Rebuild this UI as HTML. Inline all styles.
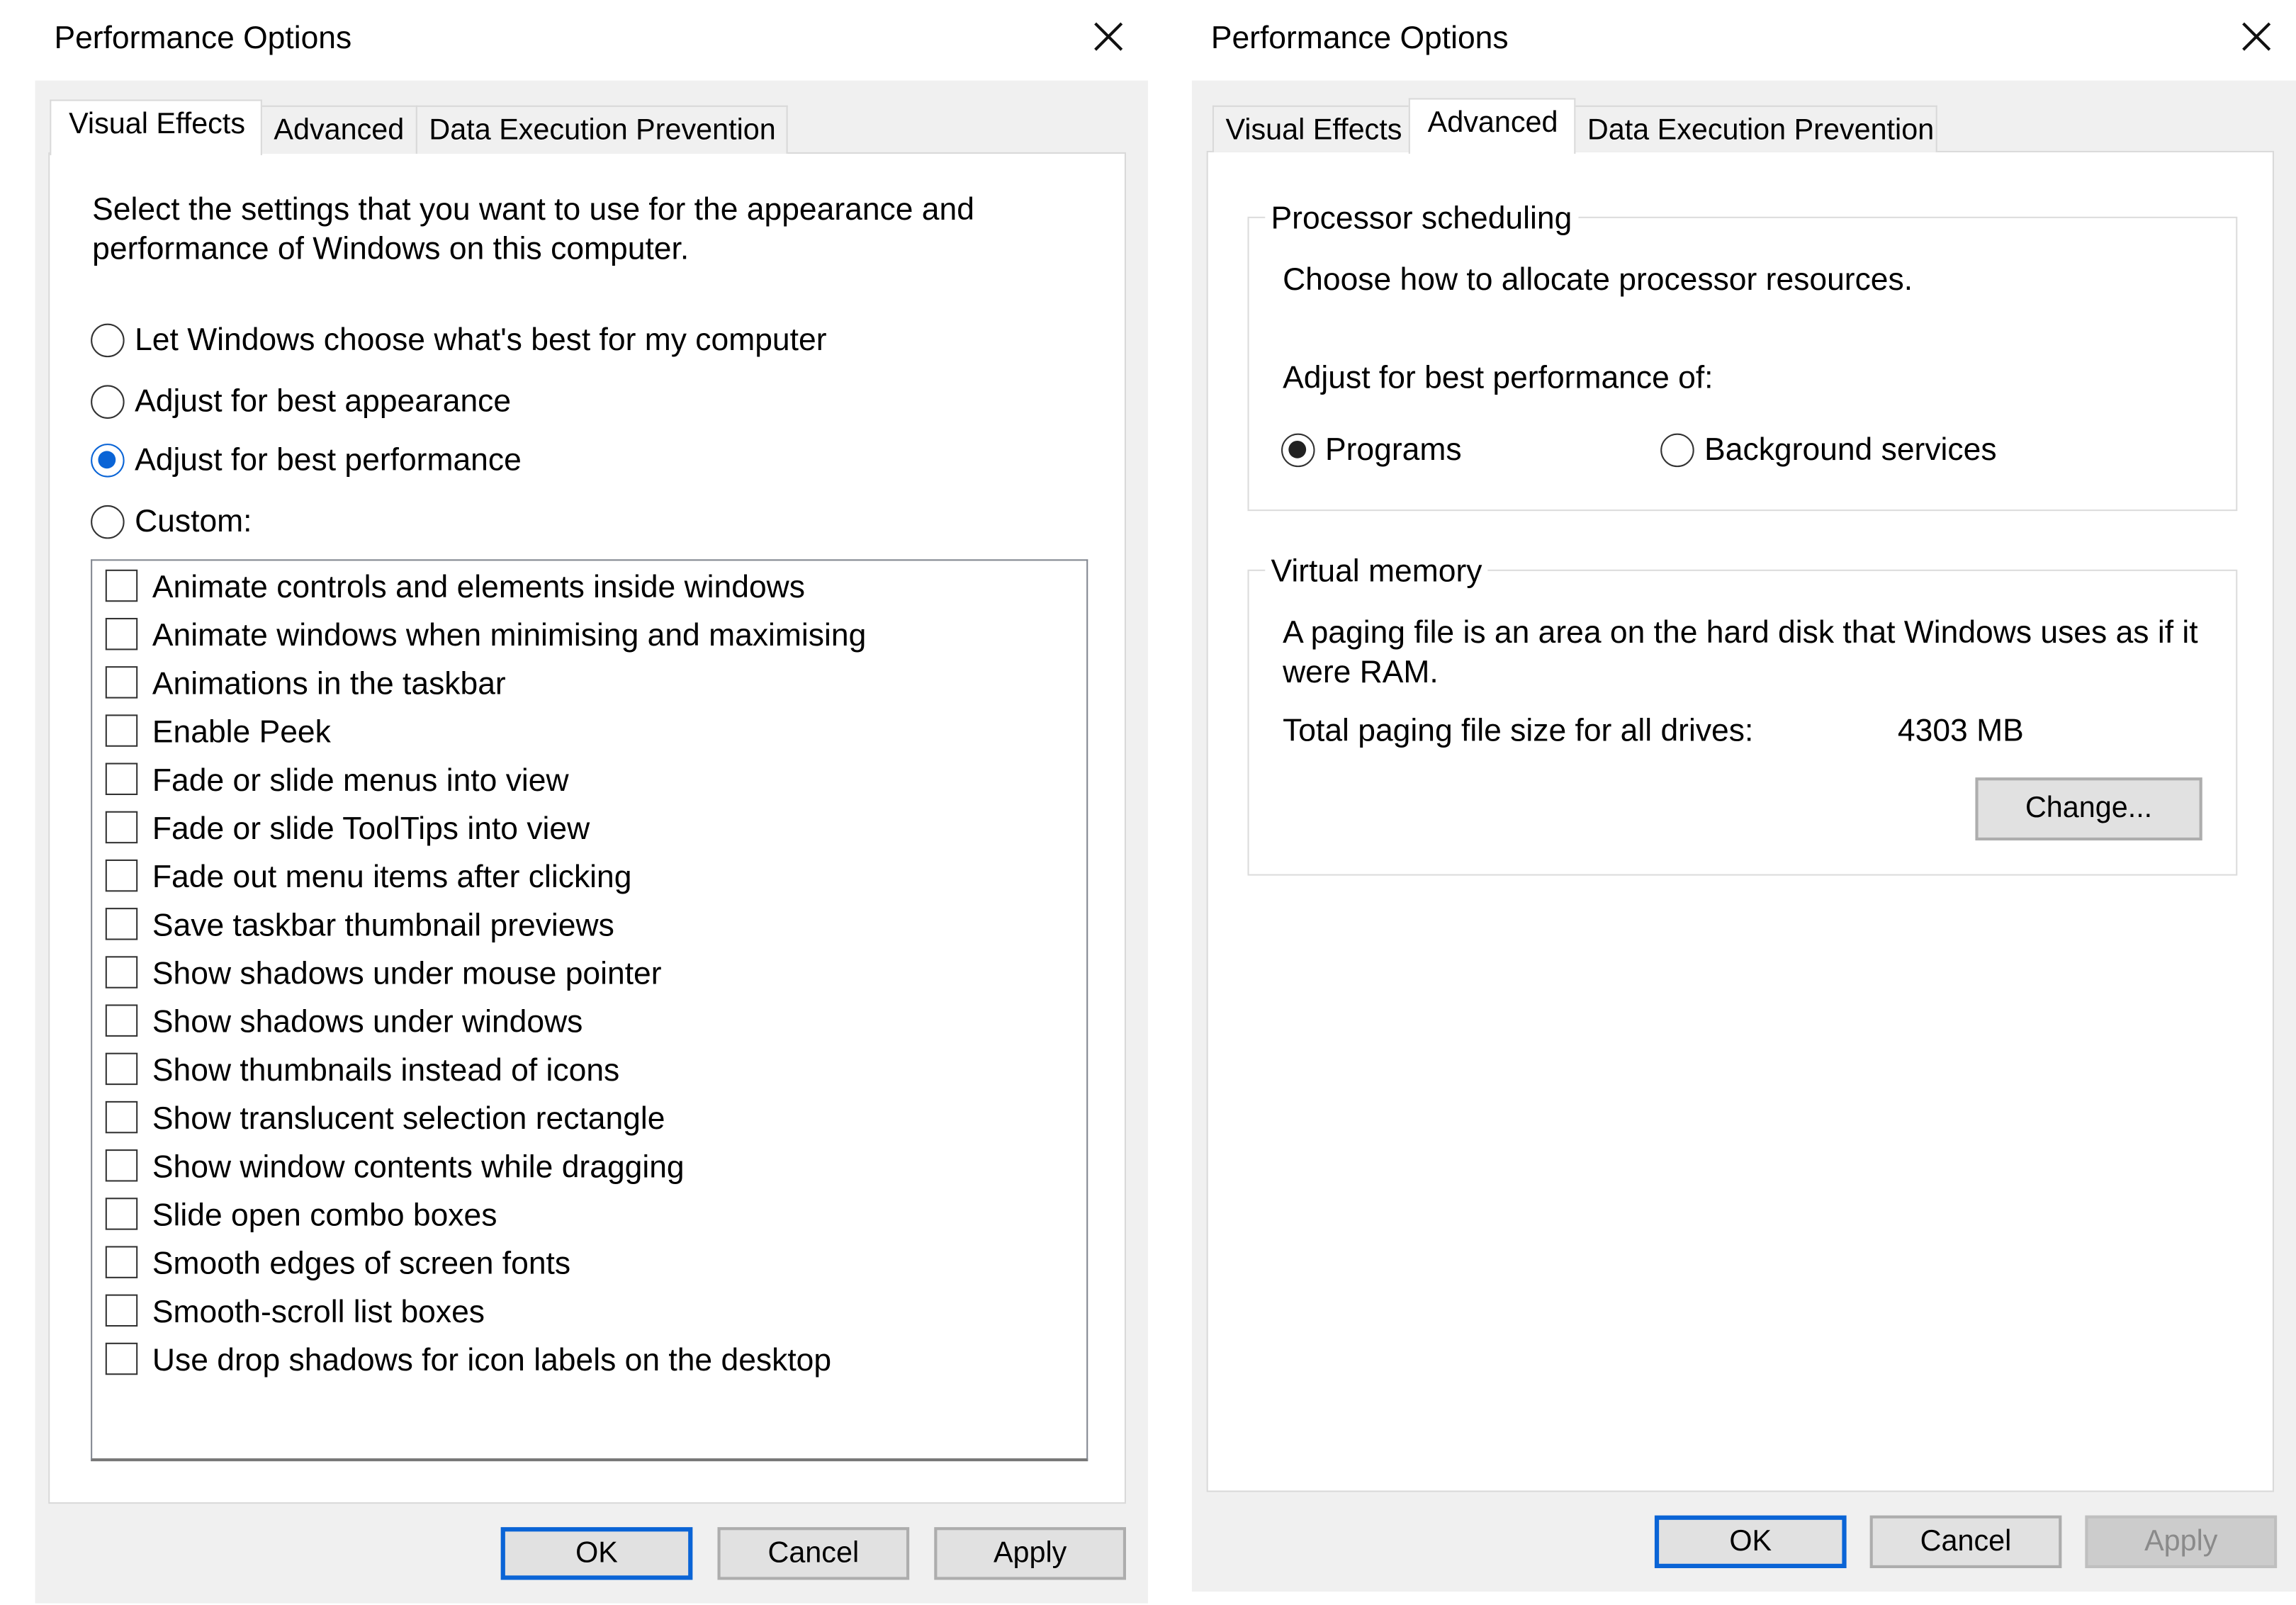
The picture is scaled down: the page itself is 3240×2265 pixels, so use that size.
<!DOCTYPE html>
<html><head><meta charset="utf-8"><style>
*{margin:0;padding:0;box-sizing:border-box}
body{width:3240px;height:2265px;background:#fff;overflow:hidden;font-family:"Liberation Sans",sans-serif;color:#000}
#w{position:absolute;left:0;top:0;width:1568px;height:1096px;transform:scale(2.0663);transform-origin:0 0}
.a{position:absolute;white-space:nowrap}
.t{font-size:21.5px;margin-top:1px}
.gray{position:absolute;background:#f0f0f0}
.tab{position:absolute;border:1px solid #d9d9d9;border-bottom:none;background:#f0f0f0;font-size:20px;padding:5px 0 0 8px;white-space:nowrap}
.tab.sel{background:#fff;z-index:2}
.panel{position:absolute;background:#fff;border:1px solid #d9d9d9}
.rad{position:absolute;width:23px;height:23px;border:1.5px solid #333;border-radius:50%;background:#fff;margin-top:2px}
.cb{position:absolute;width:22px;height:22px;border:1.5px solid #333;background:#fff}
.btn{position:absolute;height:36px;width:131px;background:#e1e1e1;border:2px solid #adadad;font-size:20px;text-align:center;line-height:32px}
.ok{border:3px solid #0a64d6;line-height:30px}
.grp{position:absolute;border:1px solid #dcdcdc}
.leg{position:absolute;background:#fff;padding:0 4px;font-size:21.5px}
</style></head><body><div id="w">
<div class="a t" style="left:37px;top:13px">Performance Options</div>
<svg class="a" style="left:747px;top:15px" width="20" height="20"><path d="M1 1L19 19M19 1L1 19" stroke="#111" stroke-width="2"/></svg>
<div class="gray" style="left:24px;top:55px;width:760px;height:1040px"></div>
<div class="panel" style="left:33px;top:104px;width:736px;height:923px"></div>
<div class="tab sel" style="left:34px;top:68px;width:145px;height:38px;padding-left:12px">Visual Effects</div>
<div class="tab" style="left:178px;top:72px;width:107px;height:33px">Advanced</div>
<div class="tab" style="left:284px;top:72px;width:254px;height:33px">Data Execution Prevention</div>
<div class="a t" style="left:63px;top:129px;line-height:27px">Select the settings that you want to use for the appearance and<br>performance of Windows on this computer.</div>
<div class="rad" style="left:62px;top:219px"></div><div class="a t" style="left:92px;top:219px">Let Windows choose what's best for my computer</div>
<div class="rad" style="left:62px;top:261px"></div><div class="a t" style="left:92px;top:261px">Adjust for best appearance</div>
<div class="rad" style="left:62px;top:301px;border-color:#0a64d6"><div style="position:absolute;left:4px;top:4px;width:12px;height:12px;border-radius:50%;background:#0a64d6"></div></div><div class="a t" style="left:92px;top:301px">Adjust for best performance</div>
<div class="rad" style="left:62px;top:343px"></div><div class="a t" style="left:92px;top:343px">Custom:</div>
<div class="a" style="left:62px;top:382px;width:681px;height:616px;border:1px solid #828790;border-bottom:2px solid #777;background:#fff"></div>
<div class="btn ok" style="left:342px;top:1043px">OK</div>
<div class="btn" style="left:490px;top:1043px">Cancel</div>
<div class="btn" style="left:638px;top:1043px">Apply</div>
<div class="a t" style="left:827px;top:13px">Performance Options</div>
<svg class="a" style="left:1531px;top:15px" width="20" height="20"><path d="M1 1L19 19M19 1L1 19" stroke="#111" stroke-width="2"/></svg>
<div class="gray" style="left:814px;top:55px;width:754px;height:1032px"></div>
<div class="panel" style="left:824px;top:103px;width:729px;height:916px"></div>
<div class="tab" style="left:828px;top:72px;width:135px;height:32px">Visual Effects</div>
<div class="tab sel" style="left:962px;top:67px;width:114px;height:38px;padding-left:12px">Advanced</div>
<div class="tab" style="left:1075px;top:72px;width:248px;height:32px">Data Execution Prevention</div>
<div class="grp" style="left:852px;top:148px;width:676px;height:201px"></div>
<div class="leg" style="left:864px;top:137px">Processor scheduling</div>
<div class="a t" style="left:876px;top:178px">Choose how to allocate processor resources.</div>
<div class="a t" style="left:876px;top:245px">Adjust for best performance of:</div>
<div class="rad" style="left:875px;top:294px"><div style="position:absolute;left:4px;top:4px;width:12px;height:12px;border-radius:50%;background:#222"></div></div><div class="a t" style="left:905px;top:294px">Programs</div>
<div class="rad" style="left:1134px;top:294px"></div><div class="a t" style="left:1164px;top:294px">Background services</div>
<div class="grp" style="left:852px;top:389px;width:676px;height:209px"></div>
<div class="leg" style="left:864px;top:378px">Virtual memory</div>
<div class="a t" style="left:876px;top:418px;line-height:27px">A paging file is an area on the hard disk that Windows uses as if it<br>were RAM.</div>
<div class="a t" style="left:876px;top:486px">Total paging file size for all drives:</div>
<div class="a t" style="left:1296px;top:486px">4303 MB</div>
<div class="btn" style="left:1349px;top:531px;width:155px;height:43px;line-height:39px">Change...</div>
<div class="btn ok" style="left:1130px;top:1035px;width:131px">OK</div>
<div class="btn" style="left:1277px;top:1035px">Cancel</div>
<div class="btn" style="left:1424px;top:1035px;background:#ccc;border-color:#bfbfbf;color:#8a8a8a">Apply</div>
<div class="cb" style="left:72px;top:389px"></div><div class="a t" style="left:104px;top:388px">Animate controls and elements inside windows</div>
<div class="cb" style="left:72px;top:422px"></div><div class="a t" style="left:104px;top:421px">Animate windows when minimising and maximising</div>
<div class="cb" style="left:72px;top:455px"></div><div class="a t" style="left:104px;top:454px">Animations in the taskbar</div>
<div class="cb" style="left:72px;top:488px"></div><div class="a t" style="left:104px;top:487px">Enable Peek</div>
<div class="cb" style="left:72px;top:521px"></div><div class="a t" style="left:104px;top:520px">Fade or slide menus into view</div>
<div class="cb" style="left:72px;top:554px"></div><div class="a t" style="left:104px;top:553px">Fade or slide ToolTips into view</div>
<div class="cb" style="left:72px;top:587px"></div><div class="a t" style="left:104px;top:586px">Fade out menu items after clicking</div>
<div class="cb" style="left:72px;top:620px"></div><div class="a t" style="left:104px;top:619px">Save taskbar thumbnail previews</div>
<div class="cb" style="left:72px;top:653px"></div><div class="a t" style="left:104px;top:652px">Show shadows under mouse pointer</div>
<div class="cb" style="left:72px;top:686px"></div><div class="a t" style="left:104px;top:685px">Show shadows under windows</div>
<div class="cb" style="left:72px;top:719px"></div><div class="a t" style="left:104px;top:718px">Show thumbnails instead of icons</div>
<div class="cb" style="left:72px;top:752px"></div><div class="a t" style="left:104px;top:751px">Show translucent selection rectangle</div>
<div class="cb" style="left:72px;top:785px"></div><div class="a t" style="left:104px;top:784px">Show window contents while dragging</div>
<div class="cb" style="left:72px;top:818px"></div><div class="a t" style="left:104px;top:817px">Slide open combo boxes</div>
<div class="cb" style="left:72px;top:851px"></div><div class="a t" style="left:104px;top:850px">Smooth edges of screen fonts</div>
<div class="cb" style="left:72px;top:884px"></div><div class="a t" style="left:104px;top:883px">Smooth-scroll list boxes</div>
<div class="cb" style="left:72px;top:917px"></div><div class="a t" style="left:104px;top:916px">Use drop shadows for icon labels on the desktop</div>
</div></body></html>
